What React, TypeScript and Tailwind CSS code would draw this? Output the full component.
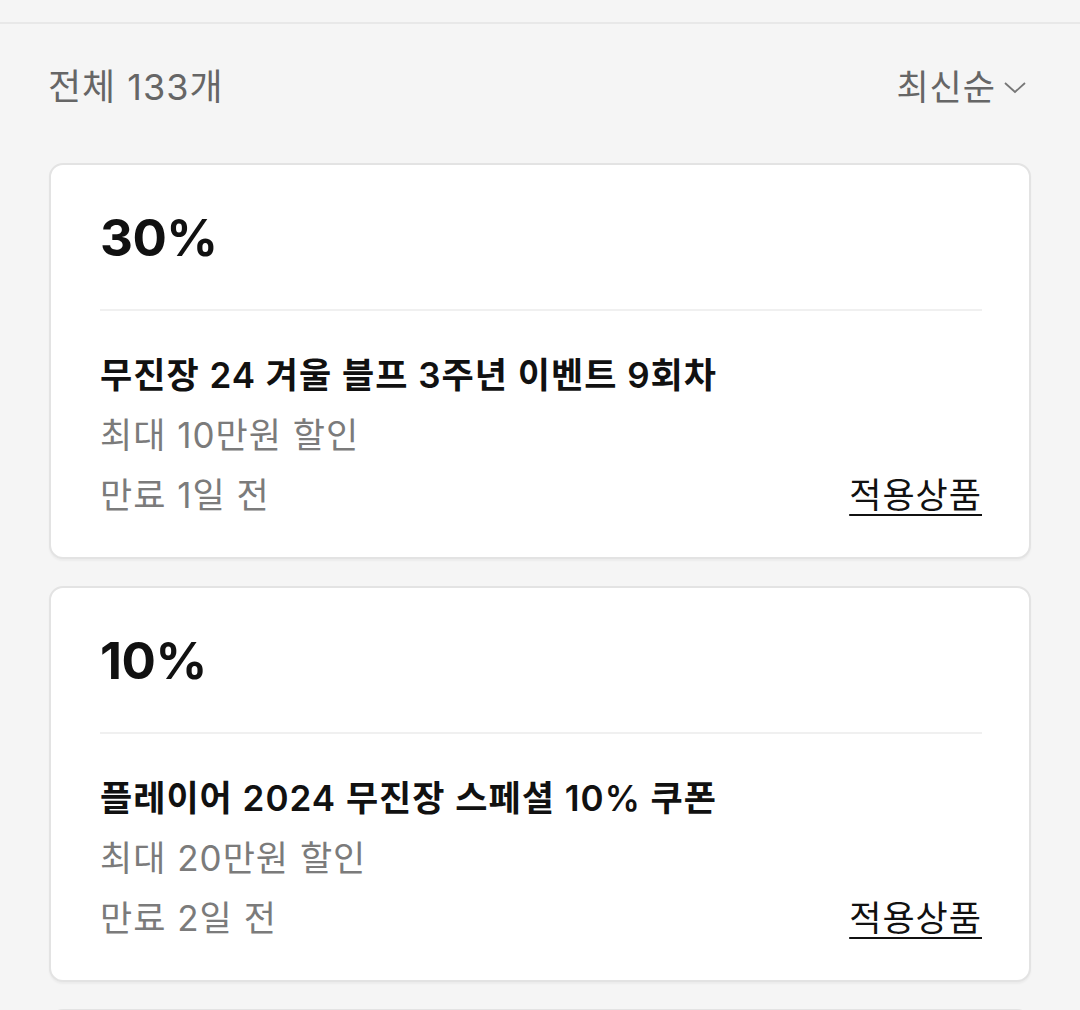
const coupons = [
  {
    rate: '30%',
    title: '무진장 24 겨울 블프 3주년 이벤트 9회차',
    max: '최대 10만원 할인',
    expire: '만료 1일 전',
  },
  {
    rate: '10%',
    title: '플레이어 2024 무진장 스페셜 10% 쿠폰',
    max: '최대 20만원 할인',
    expire: '만료 2일 전',
  },
  {
    rate: '15%',
    title: '무진장 24 겨울 블프 특가 쿠폰',
    max: '최대 5만원 할인',
    expire: '만료 3일 전',
  },
];

function CouponCard({ rate, title, max, expire }: (typeof coupons)[number]) {
  return (
    <div className="rounded-[14px] border-2 border-[#e3e3e3] bg-white pl-[49px] pr-[47px] shadow-[0_2px_2px_rgba(0,0,0,0.04)]">
      <div className="flex h-[144px] items-center">
        <div className="text-[51px] font-bold leading-none tracking-[-0.5px] text-[#111]">{rate}</div>
      </div>
      <div className="h-[2px] bg-[#f0f0f0]" />
      <div className="pb-[32px] pt-[34px] text-[35px] leading-[60px] tracking-[1px]">
        <div className="font-semibold text-[#111]">{title}</div>
        <div className="text-[#7b7b7b]">{max}</div>
        <div className="flex items-end justify-between">
          <span className="text-[#7b7b7b]">{expire}</span>
          <a className="cursor-pointer text-[#111] underline decoration-2 underline-offset-[6px]">적용상품</a>
        </div>
      </div>
    </div>
  );
}

export default function App() {
  return (
    <div
      className="min-h-screen bg-[#f5f5f5]"
      style={{ fontFamily: '"Inter", "Noto Sans CJK KR", sans-serif' }}
    >
      <div className="h-[24px] border-b-2 border-[#e8e8e8]" />
      <div className="flex items-center justify-between pb-[59px] pl-[48px] pr-[52px] pt-[46px] text-[36px] leading-[34px] tracking-[1px] text-[#666]">
        <span>전체 133개</span>
        <button className="flex items-center gap-[6px] text-[#666]">
          <span className="text-[35px]">최신순</span>
          <svg width="26" height="14" viewBox="0 0 26 14" fill="none" stroke="#777" strokeWidth="1.8">
            <polyline points="3,3 13,12 23,3" />
          </svg>
        </button>
      </div>
      <div className="mx-[49px] flex flex-col gap-[27px]">
        {coupons.map((c) => (
          <CouponCard key={c.rate + c.title} {...c} />
        ))}
      </div>
    </div>
  );
}
